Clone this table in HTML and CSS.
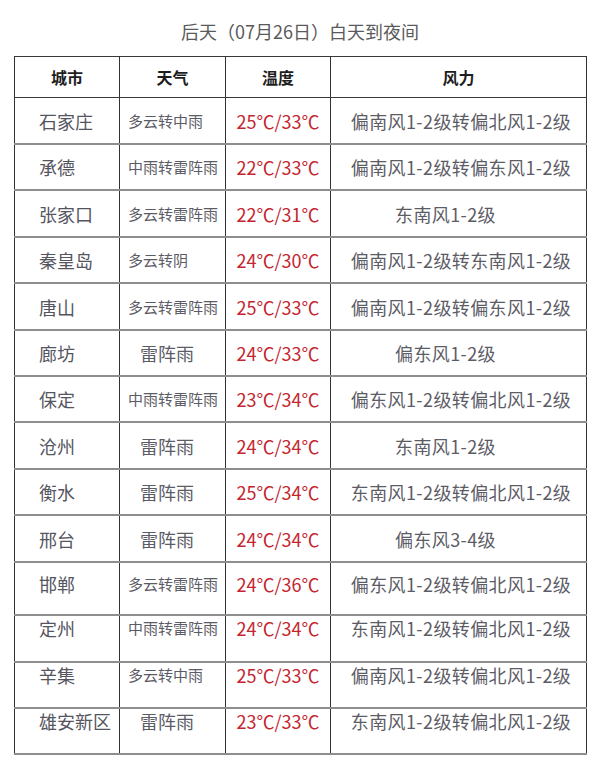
FILE: index.html
```html
<!DOCTYPE html>
<html lang="zh-CN">
<head>
<meta charset="utf-8">
<title>后天（07月26日）白天到夜间</title>
<link rel="stylesheet" href="styles.css">
</head>
<body>
<div class="page">
  <h1 class="title">后天（07月26日）白天到夜间</h1>
  <table class="forecast">
    <colgroup>
      <col class="c-city"><col class="c-wx"><col class="c-temp"><col class="c-wind">
    </colgroup>
    <thead>
      <tr class="head"><th>城市</th><th>天气</th><th>温度</th><th>风力</th></tr>
    </thead>
    <tbody>
      <tr class="h47"><td class="city">石家庄</td><td class="wx sm">多云转中雨</td><td class="temp">25℃/33℃</td><td class="wind">偏南风1-2级转偏北风1-2级</td></tr>
      <tr class="h46"><td class="city">承德</td><td class="wx sm">中雨转雷阵雨</td><td class="temp">22℃/33℃</td><td class="wind">偏南风1-2级转偏东风1-2级</td></tr>
      <tr class="h47"><td class="city">张家口</td><td class="wx sm">多云转雷阵雨</td><td class="temp">22℃/31℃</td><td class="wind short">东南风1-2级</td></tr>
      <tr class="h46"><td class="city">秦皇岛</td><td class="wx sm">多云转阴</td><td class="temp">24℃/30℃</td><td class="wind">偏南风1-2级转东南风1-2级</td></tr>
      <tr class="h47"><td class="city">唐山</td><td class="wx sm">多云转雷阵雨</td><td class="temp">25℃/33℃</td><td class="wind">偏南风1-2级转偏东风1-2级</td></tr>
      <tr class="h46"><td class="city">廊坊</td><td class="wx lg">雷阵雨</td><td class="temp">24℃/33℃</td><td class="wind short">偏东风1-2级</td></tr>
      <tr class="h46"><td class="city">保定</td><td class="wx sm">中雨转雷阵雨</td><td class="temp">23℃/34℃</td><td class="wind">偏东风1-2级转偏北风1-2级</td></tr>
      <tr class="h47"><td class="city">沧州</td><td class="wx lg">雷阵雨</td><td class="temp">24℃/34℃</td><td class="wind short">东南风1-2级</td></tr>
      <tr class="h46"><td class="city">衡水</td><td class="wx lg">雷阵雨</td><td class="temp">25℃/34℃</td><td class="wind">东南风1-2级转偏北风1-2级</td></tr>
      <tr class="h47"><td class="city">邢台</td><td class="wx lg">雷阵雨</td><td class="temp">24℃/34℃</td><td class="wind short">偏东风3-4级</td></tr>
      <tr class="high"><td class="city">邯郸</td><td class="wx sm">多云转雷阵雨</td><td class="temp">24℃/36℃</td><td class="wind">偏东风1-2级转偏北风1-2级</td></tr>
      <tr class="top t47"><td class="city">定州</td><td class="wx sm">中雨转雷阵雨</td><td class="temp">24℃/34℃</td><td class="wind">东南风1-2级转偏北风1-2级</td></tr>
      <tr class="top t46"><td class="city">辛集</td><td class="wx sm">多云转中雨</td><td class="temp">25℃/33℃</td><td class="wind">偏南风1-2级转偏北风1-2级</td></tr>
      <tr class="top t46"><td class="city">雄安新区</td><td class="wx lg">雷阵雨</td><td class="temp">23℃/33℃</td><td class="wind">东南风1-2级转偏北风1-2级</td></tr>
    </tbody>
  </table>
</div>
</body>
</html>
```

FILE: styles.css
```css
html, body {
  margin: 0;
  padding: 0;
  background: #ffffff;
}

body {
  font-family: "Noto Sans CJK SC", "Noto Sans", sans-serif;
  color: #5c5c66;
}

.page {
  padding: 20px 14px 0 14px;
}

.title {
  margin: 0;
  height: 36px;
  line-height: 22px;
  font-size: 18px;
  font-weight: 400;
  text-align: center;
  color: #5a5a5a;
}

.forecast {
  width: 572px;
  border-collapse: collapse;
  table-layout: fixed;
  border: 1px solid #3a3a3a;
}

.c-city { width: 105px; }
.c-wx { width: 106px; }
.c-temp { width: 105px; }
.c-wind { width: 256px; }

.forecast th,
.forecast td {
  border-left: 1px solid #333333;
  border-right: 1px solid #333333;
  padding: 0;
  white-space: nowrap;
  overflow: hidden;
}

.head th {
  height: 40px;
  font-size: 16px;
  font-weight: 700;
  color: #1e1e1e;
  text-align: center;
  border-bottom: 1px solid #3a3a3a;
}

.forecast tbody td {
  border-bottom: 2px solid #8e8e8e;
  font-size: 18px;
  line-height: 22px;
  vertical-align: middle;
}

.forecast .h46 td { height: 44px; }
.forecast .h47 td { height: 45px; }

.forecast .high td {
  vertical-align: top;
  padding-top: 10px;
  height: 41px;
}

.forecast .top td {
  vertical-align: top;
  padding-top: 1px;
}

.forecast .t47 td { height: 44px; }
.forecast .t46 td { height: 43px; }

.forecast .city {
  text-align: left;
  padding-left: 24px;
  color: #55555f;
}

.forecast .wx {
  text-align: left;
  color: #5c5c66;
}

.forecast .wx.sm {
  font-size: 15px;
  padding-left: 8px;
}

.forecast .wx.lg {
  font-size: 18px;
  padding-left: 20px;
}

.forecast .temp {
  text-align: center;
  color: #c4252f;
}

.forecast .wind {
  text-align: center;
  color: #5c5c66;
  letter-spacing: 0.4px;
  padding-left: 5px;
}

.forecast .wind.short {
  padding-left: 0;
  padding-right: 26px;
}
```
